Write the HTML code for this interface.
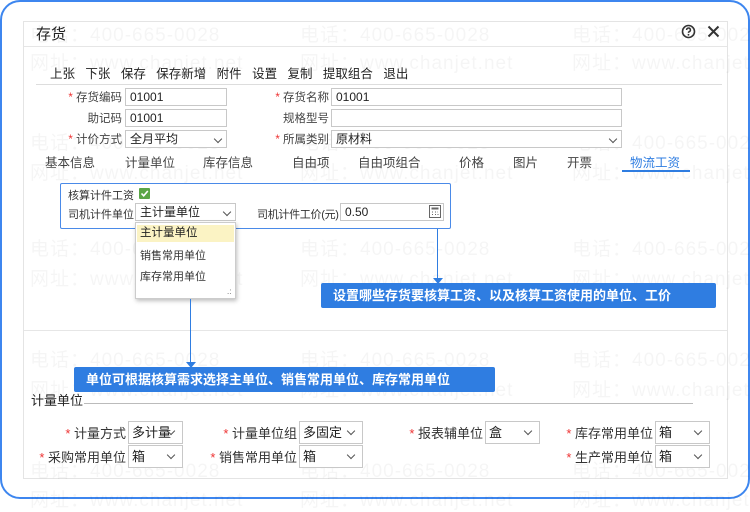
<!DOCTYPE html>
<html><head><meta charset="utf-8"><style>
*{margin:0;padding:0;box-sizing:border-box}
body{width:750px;height:500px;background:#fff;position:relative;overflow:hidden;font-family:"Liberation Sans","Noto Sans CJK SC",sans-serif;color:#333;font-size:12px}
.a{position:absolute;white-space:nowrap}
.wm{position:absolute;white-space:nowrap;font-size:19px;color:#000;opacity:.035;letter-spacing:1px}
.in{position:absolute;border:1px solid #c8c8c8;background:#fff;height:18px;font-size:12px;line-height:16px;padding-left:4px;color:#222}
.lb{position:absolute;text-align:right;font-size:11.5px;color:#444;white-space:nowrap}
.st{color:#e33}
.ch{position:absolute;right:5px;top:5px;width:6px;height:6px;border-right:1.3px solid #555;border-bottom:1.3px solid #555;transform:rotate(45deg)}
.sel .ch{top:6px;right:8px}
.sel{position:absolute;border:1px solid #c8c8c8;background:#fff;height:23px;font-size:13px;line-height:21px;padding-left:3px;color:#222}
.lb2{position:absolute;text-align:right;font-size:13px;color:#333;white-space:nowrap}
.call{position:absolute;background:#2f7de1;color:#fff;font-weight:bold;font-size:13px;border-radius:2px;line-height:25px;padding-left:12px}
</style></head><body>
<div class="a" style="left:0;top:0;width:750px;height:499px;border:2px solid #3d86ef;border-radius:20px"></div>
<div class="a" style="left:23px;top:21px;width:705px;height:458px;border:1px solid #e4e4e4"></div>
<div class="a" style="left:24px;top:46px;width:703px;border-top:1px solid #e6e6e6"></div>

<div class="wm" style="left:30px;top:20px">电话：400-665-0028</div>
<div class="wm" style="left:300px;top:20px">电话：400-665-0028</div>
<div class="wm" style="left:572px;top:20px">电话：400-665-0028</div>
<div class="wm" style="left:30px;top:48px">网址：www.chanjet.net</div>
<div class="wm" style="left:300px;top:48px">网址：www.chanjet.net</div>
<div class="wm" style="left:572px;top:48px">网址：www.chanjet.net</div>
<div class="wm" style="left:30px;top:128px">电话：400-665-0028</div>
<div class="wm" style="left:300px;top:128px">电话：400-665-0028</div>
<div class="wm" style="left:572px;top:128px">电话：400-665-0028</div>
<div class="wm" style="left:30px;top:158px">网址：www.chanjet.net</div>
<div class="wm" style="left:300px;top:158px">网址：www.chanjet.net</div>
<div class="wm" style="left:572px;top:158px">网址：www.chanjet.net</div>
<div class="wm" style="left:30px;top:234px">电话：400-665-0028</div>
<div class="wm" style="left:300px;top:234px">电话：400-665-0028</div>
<div class="wm" style="left:572px;top:234px">电话：400-665-0028</div>
<div class="wm" style="left:30px;top:264px">网址：www.chanjet.net</div>
<div class="wm" style="left:300px;top:264px">网址：www.chanjet.net</div>
<div class="wm" style="left:572px;top:264px">网址：www.chanjet.net</div>
<div class="wm" style="left:30px;top:345px">电话：400-665-0028</div>
<div class="wm" style="left:300px;top:345px">电话：400-665-0028</div>
<div class="wm" style="left:572px;top:345px">电话：400-665-0028</div>
<div class="wm" style="left:30px;top:375px">网址：www.chanjet.net</div>
<div class="wm" style="left:300px;top:375px">网址：www.chanjet.net</div>
<div class="wm" style="left:572px;top:375px">网址：www.chanjet.net</div>
<div class="wm" style="left:30px;top:456px">电话：400-665-0028</div>
<div class="wm" style="left:300px;top:456px">电话：400-665-0028</div>
<div class="wm" style="left:572px;top:456px">电话：400-665-0028</div>
<div class="wm" style="left:30px;top:485px">网址：www.chanjet.net</div>
<div class="wm" style="left:300px;top:485px">网址：www.chanjet.net</div>
<div class="wm" style="left:572px;top:485px">网址：www.chanjet.net</div>

<div class="a" style="left:36px;top:23px;font-size:15px;color:#222">存货</div>
<svg class="a" style="left:681px;top:24px" width="15" height="15" viewBox="0 0 15 15"><circle cx="7.5" cy="7.5" r="6" fill="none" stroke="#333" stroke-width="1.6"/><path d="M5.6 6a1.9 1.9 0 1 1 2.6 1.7c-.5.3-.7.6-.7 1.2" fill="none" stroke="#333" stroke-width="1.5"/><circle cx="7.5" cy="10.8" r=".9" fill="#333"/></svg>
<svg class="a" style="left:707px;top:25px" width="13" height="13" viewBox="0 0 13 13"><path d="M1.5 1.5L11.5 11.5M11.5 1.5L1.5 11.5" stroke="#333" stroke-width="2"/></svg>

<div class="a" style="left:50px;top:63px;font-size:12.5px;color:#222">上张&nbsp;&nbsp;&nbsp;下张&nbsp;&nbsp;&nbsp;保存&nbsp;&nbsp;&nbsp;保存新增&nbsp;&nbsp;&nbsp;附件&nbsp;&nbsp;&nbsp;设置&nbsp;&nbsp;&nbsp;复制&nbsp;&nbsp;&nbsp;提取组合&nbsp;&nbsp;&nbsp;退出</div>
<div class="a" style="left:36px;top:84px;width:686px;border-top:1px solid #ddd"></div>

<div class="lb" style="left:40px;width:82px;top:89px"><span class="st">* </span>存货编码</div>
<div class="in" style="left:125px;top:88px;width:102px">01001</div>
<div class="lb" style="left:40px;width:82px;top:110px">助记码</div>
<div class="in" style="left:125px;top:109px;width:102px">01001</div>
<div class="lb" style="left:40px;width:82px;top:131px"><span class="st">* </span>计价方式</div>
<div class="in" style="left:125px;top:130px;width:102px">全月平均<span class="ch"></span></div>
<div class="lb" style="left:250px;width:79px;top:89px"><span class="st">* </span>存货名称</div>
<div class="in" style="left:331px;top:88px;width:291px">01001</div>
<div class="lb" style="left:250px;width:79px;top:110px">规格型号</div>
<div class="in" style="left:331px;top:109px;width:291px"></div>
<div class="lb" style="left:250px;width:79px;top:131px"><span class="st">* </span>所属类别</div>
<div class="in" style="left:331px;top:130px;width:291px">原材料<span class="ch"></span></div>

<div class="a" style="top:152px;font-size:12.5px;color:#444;left:45px">基本信息</div>
<div class="a" style="top:152px;font-size:12.5px;color:#444;left:125px">计量单位</div>
<div class="a" style="top:152px;font-size:12.5px;color:#444;left:203px">库存信息</div>
<div class="a" style="top:152px;font-size:12.5px;color:#444;left:292px">自由项</div>
<div class="a" style="top:152px;font-size:12.5px;color:#444;left:358px">自由项组合</div>
<div class="a" style="top:152px;font-size:12.5px;color:#444;left:459px">价格</div>
<div class="a" style="top:152px;font-size:12.5px;color:#444;left:513px">图片</div>
<div class="a" style="top:152px;font-size:12.5px;color:#444;left:567px">开票</div>
<div class="a" style="top:152px;font-size:12.5px;color:#2f7de1;left:630px">物流工资</div>
<div class="a" style="left:622px;top:170px;width:68px;border-top:2px solid #2f7de1"></div>

<div class="a" style="left:60px;top:183px;width:391px;height:46px;border:1px solid #4a8ae8;border-radius:2px;background:#fff"></div>
<div class="a" style="left:68px;top:187px;font-size:11px;color:#333">核算计件工资</div>
<div class="a" style="left:139px;top:188px;width:11px;height:11px;background:#5aa646;border-radius:1px"></div>
<svg class="a" style="left:140px;top:189px" width="9" height="9"><path d="M1.5 4.5L3.7 6.8 7.8 2" fill="none" stroke="#fff" stroke-width="1.6"/></svg>
<div class="a" style="left:68px;top:206px;font-size:11px;color:#333">司机计件单位</div>
<div class="in" style="left:135px;top:203px;width:101px">主计量单位<span class="ch"></span></div>
<div class="a" style="left:257px;top:206px;font-size:11px;color:#333;letter-spacing:-.3px">司机计件工价(元)</div>
<div class="in" style="left:340px;top:203px;width:104px;background:#fff">0.50</div>
<svg class="a" style="left:429px;top:205px" width="12" height="13"><rect x=".5" y=".5" width="11" height="12" fill="#fff" stroke="#666"/><rect x="2.5" y="2.5" width="7" height="2" fill="#666"/><path d="M3 7h1M6 7h1M9 7h-.5M3 9.5h1M6 9.5h1M8.5 9.5h1" stroke="#666"/></svg>

<div class="a" style="left:135px;top:222px;width:101px;height:77px;border:1px solid #ccc;background:#fff;box-shadow:1px 2px 4px rgba(0,0,0,.25)"></div>
<div class="a" style="left:137px;top:225px;width:97px;height:17px;background:#fbf3c4;font-size:11.5px;line-height:17px;padding-left:3px;color:#222">主计量单位</div>
<div class="a" style="left:140px;top:247px;font-size:11px;color:#333">销售常用单位</div>
<div class="a" style="left:140px;top:268px;font-size:11px;color:#333">库存常用单位</div>
<div class="a" style="left:227px;top:287px;font-size:8px;color:#666">.:</div>

<div class="a" style="left:437px;top:229px;height:52px;border-left:1px solid #2f7de1"></div>
<div class="a" style="left:433px;top:278px;width:0;height:0;border-left:5px solid transparent;border-right:5px solid transparent;border-top:6px solid #2f7de1"></div>
<div class="call" style="left:321px;top:283px;width:395px;height:25px">设置哪些存货要核算工资、以及核算工资使用的单位、工价</div>

<div class="a" style="left:24px;top:330px;width:703px;border-top:1px solid #e6e6e6"></div>

<div class="a" style="left:190px;top:299px;height:66px;border-left:1px solid #2f7de1"></div>
<div class="a" style="left:186px;top:362px;width:0;height:0;border-left:5px solid transparent;border-right:5px solid transparent;border-top:6px solid #2f7de1"></div>
<div class="call" style="left:74px;top:367px;width:421px;height:25px">单位可根据核算需求选择主单位、销售常用单位、库存常用单位</div>

<div class="a" style="left:31px;top:390px;font-size:13px;color:#222">计量单位</div>
<div class="a" style="left:84px;top:403px;width:609px;border-top:1px solid #bbb"></div>

<div class="lb2" style="left:40px;width:86px;top:423px"><span class="st">* </span>计量方式</div>
<div class="sel" style="left:128px;top:421px;width:55px">多计量<span class="ch"></span></div>
<div class="lb2" style="left:200px;width:97px;top:423px"><span class="st">* </span>计量单位组</div>
<div class="sel" style="left:299px;top:421px;width:64px">多固定<span class="ch"></span></div>
<div class="lb2" style="left:390px;width:93px;top:423px"><span class="st">* </span>报表辅单位</div>
<div class="sel" style="left:485px;top:421px;width:55px">盒<span class="ch"></span></div>
<div class="lb2" style="left:550px;width:103px;top:423px"><span class="st">* </span>库存常用单位</div>
<div class="sel" style="left:655px;top:421px;width:55px">箱<span class="ch"></span></div>

<div class="lb2" style="left:30px;width:96px;top:447px"><span class="st">* </span>采购常用单位</div>
<div class="sel" style="left:128px;top:445px;width:55px">箱<span class="ch"></span></div>
<div class="lb2" style="left:190px;width:107px;top:447px"><span class="st">* </span>销售常用单位</div>
<div class="sel" style="left:299px;top:445px;width:64px">箱<span class="ch"></span></div>
<div class="lb2" style="left:550px;width:103px;top:447px"><span class="st">* </span>生产常用单位</div>
<div class="sel" style="left:655px;top:445px;width:55px">箱<span class="ch"></span></div>
</body></html>
